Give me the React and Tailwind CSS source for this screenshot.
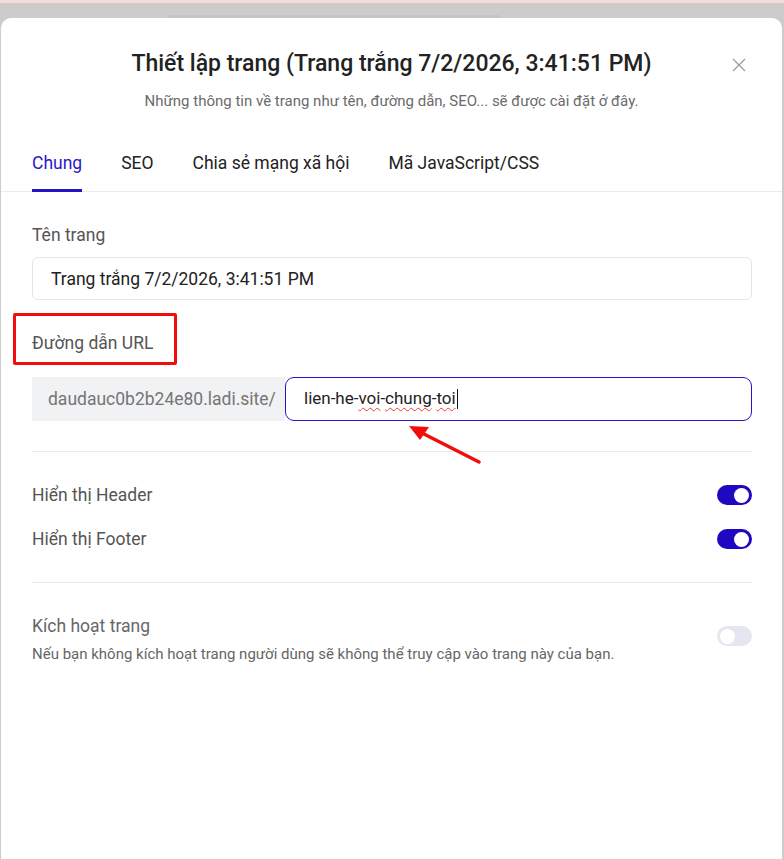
import React, { useState } from 'react';

function Toggle({ on }) {
  return (
    <div
      className={`w-[35px] h-[20px] rounded-full flex items-center px-[3px] ${
        on ? 'bg-[#1e08c2] justify-end' : 'bg-[#e6e6f2] justify-start'
      }`}
    >
      <div className="w-[15px] h-[15px] rounded-full bg-white" />
    </div>
  );
}

function Divider() {
  return <div className="h-px bg-[#ebebeb]" />;
}

export default function App() {
  const [tab, setTab] = useState('Chung');
  const tabs = ['Chung', 'SEO', 'Chia sẻ mạng xã hội', 'Mã JavaScript/CSS'];

  return (
    <div className="min-h-screen bg-[#cccccc] flex flex-col" style={{ fontFamily: 'Roboto, "Noto Sans", sans-serif' }}>
      {/* strip of the page behind the overlay */}
      <div className="h-[3px] bg-[#f8dadd]" />
      <div className="h-[15px] flex">
        <div className="ml-[168px] mt-[12px] w-[333px] h-[3px] bg-[#c4c4c4] rounded-t" />
      </div>

      <div className="flex-1 ml-px mr-[2px] bg-white rounded-t-[10px] relative">
        {/* header */}
        <div className="pt-[31px] text-center">
          <h1 className="text-[23px] leading-[30px] font-medium text-[#222222]">
            Thiết lập trang (Trang trắng 7/2/2026, 3:41:51 PM)
          </h1>
          <p className="mt-[12px] text-[15px] leading-[20px] text-[#6b6b6b]">
            Những thông tin về trang như tên, đường dẫn, SEO... sẽ được cài đặt ở đây.
          </p>
        </div>
        <button className="absolute right-[36px] top-[40px] text-[#9a9a9a]">
          <svg width="14" height="14" viewBox="0 0 14 14" fill="none" stroke="currentColor" strokeWidth="1.2">
            <path d="M1 1L13 13M13 1L1 13" />
          </svg>
        </button>

        {/* tabs */}
        <div className="mt-[40px] flex gap-[39px] px-[31px] border-b border-[#ebebeb]">
          {tabs.map((t) => (
            <button
              key={t}
              onClick={() => setTab(t)}
              className={`-mb-px pb-[14px] text-[17.5px] leading-[24px] border-b-[3px] ${
                tab === t ? 'text-[#2b17c9] border-[#2412c4]' : 'text-[#222222] border-transparent'
              }`}
            >
              {t}
            </button>
          ))}
        </div>

        {/* general settings */}
        <div className="pl-[31px] pr-[30px] pt-[31px] relative">
          <label className="block text-[17.5px] leading-[24px] text-[#555555]">Tên trang</label>
          <input
            readOnly
            value="Trang trắng 7/2/2026, 3:41:51 PM"
            className="mt-[10px] w-full h-[43px] px-[18px] rounded-[6px] border border-[#e6e6e6] text-[17.5px] text-[#222222] outline-none"
          />

          <div className="mt-[31px] relative inline-block">
            <label className="block text-[17.5px] leading-[24px] text-[#555555]">Đường dẫn URL</label>
            <div className="absolute left-[-19px] top-[-18px] w-[164px] h-[52px] border-[3px] border-[#f20d0d] rounded-[2px]" />
          </div>

          <div className="mt-[21px] flex h-[44px]">
            <div className="w-[253px] bg-[#f1f2f4] flex items-center pl-[16px] text-[17.5px] text-[#757575]">
              daudauc0b2b24e80.ladi.site/
            </div>
            <div className="flex-1 rounded-[9px] border border-[#2a14c8] flex items-center pl-[18px] text-[17px] text-[#222222]">
              <span>lien-he-</span>
              <span className="underline decoration-wavy decoration-[#f03a3a] underline-offset-[3px] decoration-1">voi</span>
              <span>-</span>
              <span className="underline decoration-wavy decoration-[#f03a3a] underline-offset-[3px] decoration-1">chung</span>
              <span>-</span>
              <span className="underline decoration-wavy decoration-[#f03a3a] underline-offset-[3px] decoration-1">toi</span>
              <span className="ml-px w-px h-[20px] bg-[#111111]" />
            </div>
          </div>

          {/* pointer to the slug field */}
          <svg className="absolute left-[407px] top-[232px]" width="80" height="45" viewBox="0 0 80 45">
            <path d="M71 38L14 9" stroke="#f20d0d" strokeWidth="3.5" strokeLinecap="round" />
            <path d="M1 2L21 3L12 16Z" fill="#f20d0d" />
          </svg>

          <div className="mt-[30px]">
            <Divider />
          </div>

          <div className="mt-[31px] flex items-center justify-between h-[24px]">
            <span className="text-[17.5px] text-[#555555]">Hiển thị Header</span>
            <Toggle on />
          </div>
          <div className="mt-[20px] flex items-center justify-between h-[24px]">
            <span className="text-[17.5px] text-[#555555]">Hiển thị Footer</span>
            <Toggle on />
          </div>

          <div className="mt-[31px]">
            <Divider />
          </div>

          <div className="mt-[31px] flex justify-between">
            <div>
              <div className="text-[17.5px] leading-[24px] text-[#666666]">Kích hoạt trang</div>
              <div className="mt-[6px] text-[15px] leading-[20px] text-[#666666]">
                Nếu bạn không kích hoạt trang người dùng sẽ không thể truy cập vào trang này của bạn.
              </div>
            </div>
            <div className="mt-[12px]">
              <Toggle on={false} />
            </div>
          </div>
        </div>
      </div>
    </div>
  );
}
